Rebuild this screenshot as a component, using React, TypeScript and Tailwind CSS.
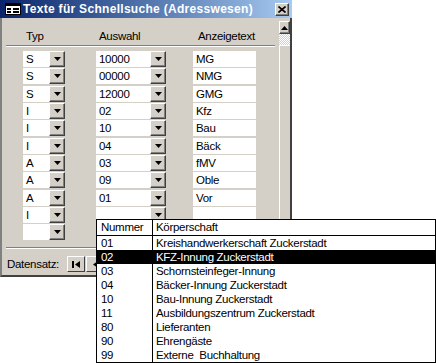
import React from 'react'

const rows = [
  { t: 'S', a: '10000', z: 'MG', h: 'h-[17px]' },
  { t: 'S', a: '00000', z: 'NMG', h: 'h-[18px]' },
  { t: 'S', a: '12000', z: 'GMG', h: 'h-[17px]' },
  { t: 'I', a: '02', z: 'Kfz', h: 'h-[17px]' },
  { t: 'I', a: '10', z: 'Bau', h: 'h-[18px]' },
  { t: 'I', a: '04', z: 'Bäck', h: 'h-[17px]' },
  { t: 'A', a: '03', z: 'fMV', h: 'h-[17px]' },
  { t: 'A', a: '09', z: 'Oble', h: 'h-[18px]' },
  { t: 'A', a: '01', z: 'Vor', h: 'h-[17px]' },
  { t: 'I', a: '', z: '', h: 'h-[17px]' },
  { t: '', a: '', z: '', h: 'h-[17px]' },
]

const items = [
  ['01', 'Kreishandwerkerschaft Zuckerstadt'],
  ['02', 'KFZ-Innung Zuckerstadt'],
  ['03', 'Schornsteinfeger-Innung'],
  ['04', 'Bäcker-Innung Zuckerstadt'],
  ['10', 'Bau-Innung Zuckerstadt'],
  ['11', 'Ausbildungszentrum Zuckerstadt'],
  ['80', 'Lieferanten'],
  ['90', 'Ehrengäste'],
  ['99', 'Externe  Buchhaltung'],
]

function DropButton() {
  return (
    <div className="w-[16px] h-[16px] shrink-0 bg-[#d4d0c8] border border-t-white border-l-white border-r-[#404040] border-b-[#404040] shadow-[inset_-1px_-1px_#808080] flex items-center justify-center">
      <svg width="7" height="4" viewBox="0 0 7 4">
        <path d="M0 0h7L3.5 4z" fill="#000" />
      </svg>
    </div>
  )
}

function Field({ w, text }: { w: string; text: string }) {
  return <div className={`${w} h-[16px] bg-white pl-[3px] leading-[16px] whitespace-pre`}>{text}</div>
}

export default function App() {
  return (
    <div className="relative w-[436px] h-[363px] bg-white overflow-hidden font-['Liberation_Sans',sans-serif] text-[11.5px] tracking-[-0.3px] text-black">
      <div className="w-[292px] h-[277px] flex flex-col bg-[#d4d0c8]">
        {/* title bar */}
        <div className="h-[18px] shrink-0 flex items-center bg-gradient-to-r from-[#0a246a] to-[#a6caf0] pl-[5px] pr-[3px]">
          <svg width="16" height="12" viewBox="0 0 16 12" className="shrink-0">
            <rect x="0.5" y="0.5" width="15" height="11" fill="#fff" stroke="#000" />
            <rect x="1" y="1" width="14" height="2" fill="#000" />
            <rect x="2" y="5" width="4" height="2" fill="#000" />
            <rect x="8" y="5" width="6" height="2" fill="#000" />
            <rect x="2" y="8" width="4" height="2" fill="#000" />
            <rect x="8" y="8" width="6" height="2" fill="#000" />
          </svg>
          <span className="ml-[2px] font-bold text-[12px] tracking-[0.3px] text-white whitespace-nowrap">
            Texte für Schnellsuche (Adresswesen)
          </span>
          <div className="ml-auto w-[14px] h-[13px] bg-[#d4d0c8] border border-t-white border-l-white border-r-[#404040] border-b-[#404040] shadow-[inset_-1px_-1px_#808080] flex items-center justify-center">
            <svg width="8" height="7" viewBox="0 0 8 7">
              <path d="M0.5 0.5L7.5 6.5M7.5 0.5L0.5 6.5" stroke="#000" strokeWidth="1.6" />
            </svg>
          </div>
        </div>

        {/* body */}
        <div className="flex-1 flex border-l-2 border-l-[#808080] border-r-2 border-r-[#404040] border-b-2 border-b-[#404040]">
          <div className="flex-1 flex flex-col">
            <div className="h-[27px] flex pt-[11px] leading-[15px]">
              <div className="ml-[21px] w-[43px] pl-[3px]">Typ</div>
              <div className="ml-[31px] w-[71px] pl-[2px]">Auswahl</div>
              <div className="ml-[27px] w-[63px] pl-[3px]">Anzeigetext</div>
            </div>
            <div className="mx-[4px] h-[2px] border-t border-t-[#808080] border-b border-b-white" />
            <div className="mt-[4px] flex flex-col">
              {rows.map((r, i) => (
                <div key={i} className={`${r.h} flex items-start`}>
                  <div className="ml-[21px] flex">
                    <Field w="w-[26px]" text={r.t} />
                    <DropButton />
                  </div>
                  <div className="ml-[31px] flex">
                    <Field w="w-[54px]" text={r.a} />
                    <DropButton />
                  </div>
                  <div className="ml-[27px]">
                    <Field w="w-[63px]" text={r.z} />
                  </div>
                </div>
              ))}
            </div>
            <div className="mt-[6px] mx-[4px] h-[2px] border-t border-t-[#808080] border-b border-b-white" />
            <div className="flex-1 flex items-center pl-[5px] pt-[4px]">
              <span className="w-[60px] leading-[15px]">Datensatz:</span>
              <div className="w-[18px] h-[16px] bg-[#d4d0c8] border border-t-white border-l-white border-r-[#404040] border-b-[#404040] flex items-center justify-center">
                <svg width="8" height="7" viewBox="0 0 8 7">
                  <rect x="0" y="0" width="2" height="7" fill="#000" />
                  <path d="M8 0v7L3 3.5z" fill="#000" />
                </svg>
              </div>
              <div className="ml-[1px] w-[18px] h-[16px] bg-[#d4d0c8] border border-t-white border-l-white border-r-[#404040] border-b-[#404040] flex items-center justify-center">
                <svg width="5" height="7" viewBox="0 0 5 7">
                  <path d="M5 0v7L0 3.5z" fill="#000" />
                </svg>
              </div>
            </div>
          </div>

          {/* vertical scrollbar */}
          <div className="w-[11px] pt-[3px] flex flex-col">
            <div className="h-[13px] bg-[#d4d0c8] border border-t-white border-l-white border-r-[#404040] border-b-[#404040] shadow-[inset_-1px_-1px_#808080] flex items-center justify-center">
              <svg width="7" height="4" viewBox="0 0 7 4">
                <path d="M0 4h7L3.5 0z" fill="#000" />
              </svg>
            </div>
            <div className="h-[11px] bg-[repeating-conic-gradient(#ffffff_0%_25%,#d4d0c8_0%_50%)] bg-[length:2px_2px]" />
            <div className="flex-1 bg-[#d4d0c8] border-t border-l border-t-white border-l-white" />
          </div>
        </div>
      </div>

      {/* open combo list */}
      <div className="absolute left-[96px] top-[219px] w-[340px] h-[144px] bg-white border border-black flex flex-col">
        <div className="h-[16px] flex border-b border-b-black leading-[15px]">
          <div className="w-[56px] pl-[4px] border-r border-r-black">Nummer</div>
          <div className="flex-1 pl-[3px]">Körperschaft</div>
        </div>
        {items.map(([n, k], i) => (
          <div key={n} className={`h-[14px] flex leading-[14px] ${i === 1 ? 'bg-black text-white' : ''}`}>
            <div className="w-[56px] pl-[4px] border-r border-r-black">{n}</div>
            <div className="flex-1 pl-[3px] whitespace-pre">{k}</div>
          </div>
        ))}
      </div>
    </div>
  )
}
